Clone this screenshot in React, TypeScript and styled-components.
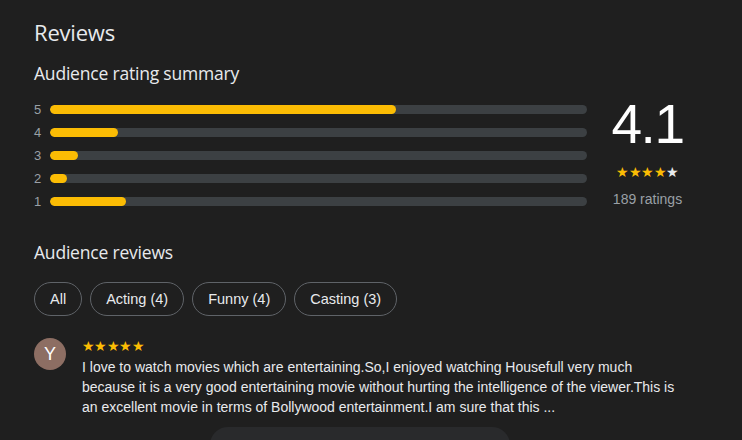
import React from "react";
import styled, { createGlobalStyle } from "styled-components";

const Global = createGlobalStyle`
  html, body { margin: 0; padding: 0; background: #1f1f1f; }
  body { font-family: "Liberation Sans", Arial, sans-serif; overflow: hidden; }
`;

const Page = styled.div`
  width: 742px;
  height: 440px;
  background: #1f1f1f;
  padding: 18px 34px 0 34px;
  box-sizing: border-box;
  overflow: hidden;
  color: #e8eaed;
`;

const Title = styled.h1`
  margin: 0;
  font-family: "Open Sans", sans-serif;
  font-weight: 400;
  font-size: 22px;
  line-height: 28px;
  color: #e8eaed;
  letter-spacing: -0.2px;
`;

const SubTitle = styled.h2`
  margin: 0;
  font-family: "Open Sans", sans-serif;
  font-weight: 400;
  font-size: 17.5px;
  line-height: 24px;
  color: #e8eaed;
  letter-spacing: -0.2px;
`;

const SummaryHead = styled(SubTitle)`
  margin-top: 15px;
`;

const Summary = styled.div`
  display: flex;
  align-items: flex-start;
  margin-top: 17px;
`;

const Bars = styled.div`
  width: 553px;
  display: flex;
  flex-direction: column;
  gap: 8px;
`;

const BarRow = styled.div`
  display: flex;
  align-items: center;
  height: 15px;
`;

const BarLabel = styled.span`
  width: 16px;
  font-size: 13px;
  color: #9aa0a6;
`;

const Track = styled.div`
  flex: 1;
  height: 9px;
  border-radius: 5px;
  background: #3c4043;
  overflow: hidden;
`;

const Fill = styled.div`
  height: 100%;
  border-radius: 5px;
  background: #fbbc04;
`;

const Score = styled.div`
  flex: 1;
  display: flex;
  flex-direction: column;
  align-items: center;
  margin-top: -10px;
  padding-left: 0px;
`;

const Big = styled.div`
  font-size: 55px;
  line-height: 64px;
  letter-spacing: -1.5px;
  color: #ffffff;
`;

const StarsRow = styled.div<{ $size: number }>`
  display: flex;
  font-size: ${(p) => p.$size}px;
  line-height: 14px;
  letter-spacing: -0.6px;
`;

const RatingStars = styled.div`
  margin-top: 9px;
`;

const Star = styled.span<{ $on: boolean }>`
  color: ${(p) => (p.$on ? "#fbbc04" : "#e8eaed")};
`;

const Count = styled.div`
  margin-top: 12px;
  font-size: 14px;
  color: #9aa0a6;
`;

const ReviewsHead = styled(SubTitle)`
  margin-top: 31px;
`;

const Chips = styled.div`
  display: flex;
  gap: 8px;
  margin-top: 18px;
`;

const Chip = styled.div`
  height: 34px;
  box-sizing: border-box;
  padding: 0 15px;
  border: 1px solid #5f6368;
  border-radius: 17px;
  display: flex;
  align-items: center;
  font-size: 14.5px;
  color: #e8eaed;
`;

const Review = styled.div`
  display: flex;
  gap: 16px;
  margin-top: 23px;
`;

const Avatar = styled.div`
  width: 32px;
  height: 32px;
  flex: none;
  border-radius: 50%;
  background: #8d6e63;
  color: #ffffff;
  font-size: 18px;
  display: flex;
  align-items: center;
  justify-content: center;
  margin-top: -1px;
`;

const Body = styled.div`
  display: flex;
  flex-direction: column;
`;

const Text = styled.p`
  margin: 4px 0 0 0;
  font-size: 14px;
  line-height: 20px;
  color: #e8eaed;
  width: 610px;
`;

const MoreWrap = styled.div`
  display: flex;
  justify-content: center;
  margin-top: 10px;
  padding-right: 23px;
`;

const More = styled.div`
  width: 300px;
  height: 36px;
  border-radius: 18px;
  background: #292a2c;
`;

const bars = [
  { n: 5, p: 64.4 },
  { n: 4, p: 12.7 },
  { n: 3, p: 5.2 },
  { n: 2, p: 3.2 },
  { n: 1, p: 14.2 },
];

const Stars = ({ on, size }: { on: number; size: number }) => (
  <StarsRow $size={size}>
    {[0, 1, 2, 3, 4].map((i) => (
      <Star key={i} $on={i < on}>
        ★
      </Star>
    ))}
  </StarsRow>
);

export default function App() {
  return (
    <Page>
      <Global />
      <Title>Reviews</Title>
      <SummaryHead>Audience rating summary</SummaryHead>
      <Summary>
        <Bars>
          {bars.map((b) => (
            <BarRow key={b.n}>
              <BarLabel>{b.n}</BarLabel>
              <Track>
                <Fill style={{ width: `${b.p}%` }} />
              </Track>
            </BarRow>
          ))}
        </Bars>
        <Score>
          <Big>4.1</Big>
          <RatingStars>
            <Stars on={4} size={14} />
          </RatingStars>
          <Count>189 ratings</Count>
        </Score>
      </Summary>
      <ReviewsHead>Audience reviews</ReviewsHead>
      <Chips>
        <Chip>All</Chip>
        <Chip>Acting (4)</Chip>
        <Chip>Funny (4)</Chip>
        <Chip>Casting (3)</Chip>
      </Chips>
      <Review>
        <Avatar>Y</Avatar>
        <Body>
          <Stars on={5} size={14} />
          <Text>
            I love to watch movies which are entertaining.So,I enjoyed watching Housefull very much
            <br />
            because it is a very good entertaining movie without hurting the intelligence of the viewer.This is
            <br />
            an excellent movie in terms of Bollywood entertainment.I am sure that this ...
          </Text>
        </Body>
      </Review>
      <MoreWrap>
        <More />
      </MoreWrap>
    </Page>
  );
}
